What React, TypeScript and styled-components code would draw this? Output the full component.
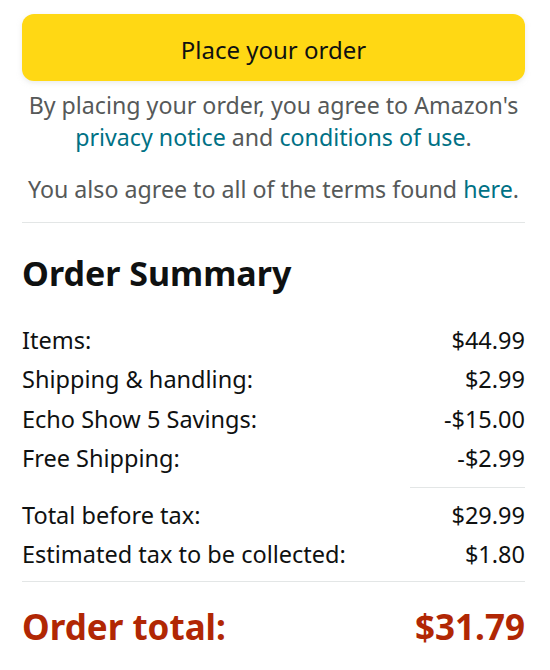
import React from "react";
import styled, { createGlobalStyle } from "styled-components";

const Global = createGlobalStyle`
  html, body { margin: 0; padding: 0; background: #fff; }
  body { font-family: "Noto Sans", "Open Sans", Arial, sans-serif; color: #0f1111; }
`;

const Page = styled.div`
  width: 503px;
  padding: 14px 25px 0 22px;
  display: flex;
  flex-direction: column;
`;

const PlaceButton = styled.button`
  height: 67px;
  padding: 3px 0 0;
  border: none;
  border-radius: 12px;
  background: #ffd814;
  box-shadow: 0 2px 5px rgba(213, 217, 217, 0.5);
  font-family: inherit;
  font-size: 24px;
  color: #0f1111;
  cursor: pointer;
`;

const Legal = styled.p<{ $top: number }>`
  margin: ${(p) => p.$top}px -10px 0;
  text-align: center;
  font-size: 23.2px;
  line-height: 32px;
  color: #565959;
`;

const Link = styled.a`
  color: #007185;
  text-decoration: none;
`;

const Rule = styled.hr<{ $top: number; $short?: boolean }>`
  margin: ${(p) => p.$top}px 0 0 ${(p) => (p.$short ? "auto" : "0")};
  width: ${(p) => (p.$short ? "115px" : "100%")};
  border: none;
  border-top: 1px solid #e3e6e6;
  height: 0;
`;

const Heading = styled.h2`
  margin: 30px 0 0;
  font-size: 34px;
  line-height: 40px;
  font-weight: 700;
  color: #0f1111;
`;

const Rows = styled.div<{ $top: number }>`
  margin-top: ${(p) => p.$top}px;
  display: flex;
  flex-direction: column;
`;

const Row = styled.div`
  display: flex;
  justify-content: space-between;
  align-items: center;
  font-size: 23.5px;
  line-height: 39.3px;
  color: #0f1111;
`;

const TotalRow = styled.div`
  margin-top: 25px;
  display: flex;
  justify-content: space-between;
  align-items: center;
  font-size: 35px;
  line-height: 40px;
  font-weight: 700;
  color: #b12704;
`;

const top = [
  ["Items:", "$44.99"],
  ["Shipping & handling:", "$2.99"],
  ["Echo Show 5 Savings:", "-$15.00"],
  ["Free Shipping:", "-$2.99"],
];
const bottom = [
  ["Total before tax:", "$29.99"],
  ["Estimated tax to be collected:", "$1.80"],
];

export default function App() {
  return (
    <>
      <Global />
      <Page>
        <PlaceButton>Place your order</PlaceButton>
        <Legal $top={8}>
          By placing your order, you agree to Amazon's{" "}
          <Link href="#">privacy notice</Link> and{" "}
          <Link href="#">conditions of use</Link>.
        </Legal>
        <Legal $top={20}>
          You also agree to all of the terms found <Link href="#">here</Link>.
        </Legal>
        <Rule $top={17} />
        <Heading>Order Summary</Heading>
        <Rows $top={28}>
          {top.map(([l, v]) => (
            <Row key={l}>
              <span>{l}</span>
              <span>{v}</span>
            </Row>
          ))}
        </Rows>
        <Rule $top={9} $short />
        <Rows $top={8}>
          {bottom.map(([l, v]) => (
            <Row key={l}>
              <span>{l}</span>
              <span>{v}</span>
            </Row>
          ))}
        </Rows>
        <Rule $top={6} />
        <TotalRow>
          <span>Order total:</span>
          <span>$31.79</span>
        </TotalRow>
      </Page>
    </>
  );
}
